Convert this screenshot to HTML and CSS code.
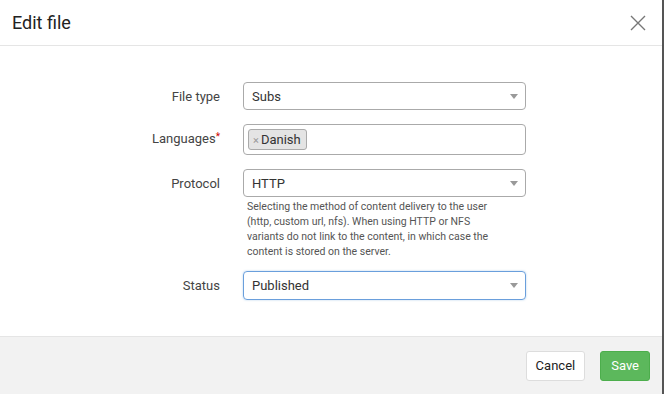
FILE: index.html
```html
<!DOCTYPE html>
<html lang="en">
<head>
  <meta charset="UTF-8">
  <title>Edit file</title>
  <link rel="stylesheet" href="styles.css">
</head>
<body>

<div class="modal">
  <div class="modal-header">
    <h4>Edit file</h4>
    <button class="close" aria-label="Close">
      <svg width="16" height="16" viewBox="0 0 16 16"><path d="M1 1L15 15M15 1L1 15" stroke="#777" stroke-width="1.4" fill="none"/></svg>
    </button>
  </div>

  <div class="modal-body">
    <div class="form-row">
      <label>File type</label>
      <div class="field">
        <div class="select">Subs<span class="caret"></span></div>
      </div>
    </div>

    <div class="form-row">
      <label>Languages<span class="req">*</span></label>
      <div class="field">
        <div class="tags"><span class="tag"><span class="x">×</span>Danish</span></div>
      </div>
    </div>

    <div class="form-row">
      <label>Protocol</label>
      <div class="field">
        <div class="select">HTTP<span class="caret"></span></div>
        <p class="help">Selecting the method of content delivery to the user (http, custom url, nfs). When using HTTP or NFS variants do not link to the content, in which case the content is stored on the server.</p>
      </div>
    </div>

    <div class="form-row">
      <label>Status</label>
      <div class="field">
        <div class="select focus">Published<span class="caret"></span></div>
      </div>
    </div>
  </div>

  <div class="modal-footer">
    <button class="btn">Cancel</button>
    <button class="btn btn-success">Save</button>
  </div>
</div>

</body>
</html>
```

FILE: styles.css
```css
/* ============================
   Base
============================ */
* {
  box-sizing: border-box;
}

body {
  margin: 0;
  font-family: Roboto, Arial, sans-serif;
  color: #333;
  background: #fff;
}

.modal {
  width: 664px;
  height: 394px;
  border-right: 2px solid #555;
  display: flex;
  flex-direction: column;
}

/* ============================
   Header
============================ */
.modal-header {
  height: 46px;
  border-bottom: 1px solid #e5e5e5;
  display: flex;
  align-items: center;
  justify-content: space-between;
  padding: 0 16px 0 12px;
}

.modal-header h4 {
  margin: 0;
  font-size: 18px;
  font-weight: normal;
  color: #222;
}

.close {
  background: none;
  border: none;
  padding: 0;
  display: flex;
}

/* ============================
   Body / form
============================ */
.modal-body {
  flex: 1;
  padding: 36px 0 0;
}

.form-row {
  display: flex;
  margin-bottom: 14px;
}

.form-row label {
  width: 220px;
  text-align: right;
  font-size: 13px;
  padding-top: 7px;
  color: #444;
}

.req {
  color: #c00;
  font-size: 10px;
  vertical-align: top;
}

.field {
  margin-left: 23px;
  width: 283px;
}

.select {
  position: relative;
  height: 28px;
  border: 1px solid #aaa;
  border-radius: 4px;
  padding: 6px 8px;
  font-size: 13px;
  color: #333;
}

.select.focus {
  height: 29px;
  border-color: #6a9fdc;
  box-shadow: 0 0 2px rgba(91, 157, 217, 0.5);
}

.caret {
  position: absolute;
  right: 7px;
  top: 11px;
  border-left: 4px solid transparent;
  border-right: 4px solid transparent;
  border-top: 5px solid #999;
}

.tags {
  height: 31px;
  border: 1px solid #aaa;
  border-radius: 4px;
  padding: 4px 4px;
}

.tag {
  display: inline-block;
  background: #e4e4e4;
  border: 1px solid #aaa;
  border-radius: 3px;
  padding: 2px 5px 2px 4px;
  font-size: 13px;
}

.tag .x {
  color: #999;
  font-size: 11px;
  margin-right: 2px;
}

.help {
  margin: 2px 0 -2px 4px;
  font-size: 10.5px;
  line-height: 15px;
  color: #555;
  padding-right: 20px;
}

/* ============================
   Footer
============================ */
.modal-footer {
  height: 58px;
  background: #f2f2f2;
  border-top: 1px solid #e5e5e5;
  display: flex;
  align-items: center;
  justify-content: flex-end;
  padding: 0 12px 0 0;
  gap: 15px;
}

.btn {
  font-family: inherit;
  font-size: 13px;
  height: 30px;
  padding: 0 9px;
  border: 1px solid #ddd;
  border-radius: 3px;
  background: #fff;
  color: #222;
}

.btn-success {
  padding: 0 10px;
  background: #5cb85c;
  border-color: #4cae4c;
  color: #fff;
}
```
